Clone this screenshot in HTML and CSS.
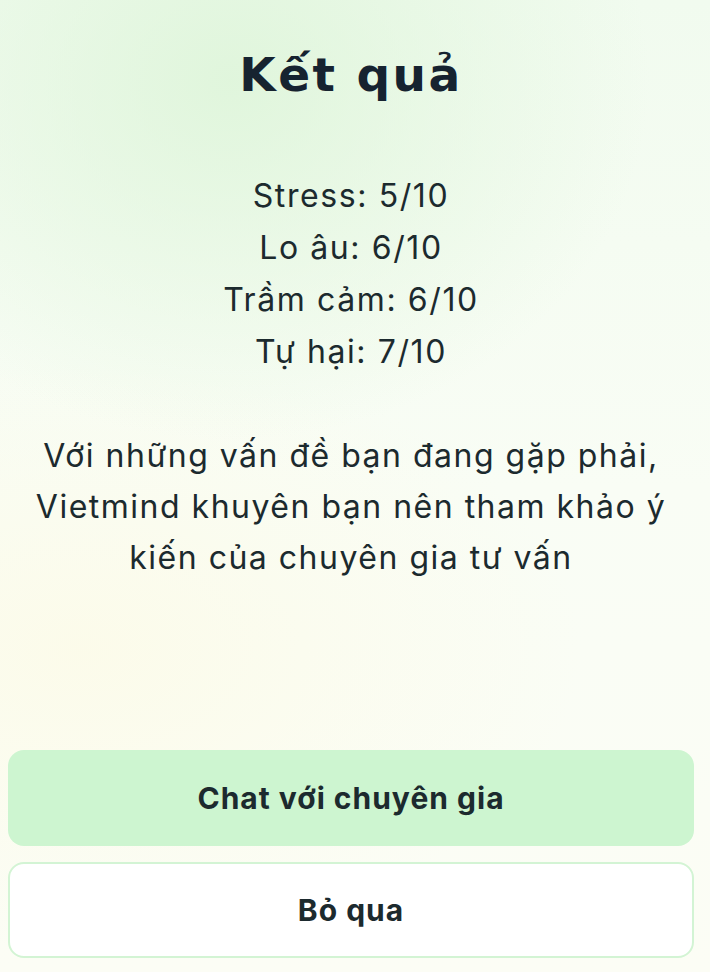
FILE: index.html
```html
<!DOCTYPE html>
<html lang="vi">
<head>
<meta charset="utf-8">
<title>Kết quả</title>
<link rel="stylesheet" href="styles.css">
</head>
<body>
<main class="screen">
  <h1 class="title">Kết quả</h1>
  <ul class="scores">
    <li>Stress: 5/10</li>
    <li>Lo âu: 6/10</li>
    <li>Trầm cảm: 6/10</li>
    <li>Tự hại: 7/10</li>
  </ul>
  <p class="advice">Với những vấn đề bạn đang gặp phải, Vietmind khuyên bạn nên tham khảo ý kiến của chuyên gia tư vấn</p>
  <div class="actions">
    <button class="btn btn-primary">Chat với chuyên gia</button>
    <button class="btn btn-secondary">Bỏ qua</button>
  </div>
</main>
</body>
</html>
```
FILE: styles.css
```css
* { box-sizing: border-box; }
html, body { margin: 0; height: 100%; }
body {
  font-family: "Inter", "Liberation Sans", sans-serif;
  color: #1c2a2e;
  background:
    radial-gradient(ellipse 420px 360px at 230px 80px, rgba(222, 245, 218, 0.9), rgba(222, 245, 218, 0) 100%),
    radial-gradient(ellipse 500px 300px at 80px 650px, rgba(252, 251, 233, 0.9), rgba(252, 251, 233, 0) 100%),
    linear-gradient(180deg, #f1fbef 0%, #f9fdf5 50%, #fcfdf5 100%);
  width: 710px;
  height: 972px;
  overflow: hidden;
}
.screen {
  display: flex;
  flex-direction: column;
  align-items: center;
  height: 972px;
  padding: 0 16px 0 8px;
}
.title {
  margin: 40px 0 0;
  font-family: "DejaVu Sans", "Inter", sans-serif;
  font-weight: 700;
  font-size: 47px;
  line-height: 70px;
  letter-spacing: 2.5px;
  color: #162330;
}
.scores {
  list-style: none;
  margin: 60px 0 0;
  padding: 0;
  text-align: center;
  font-size: 32px;
  line-height: 52px;
  font-weight: 400;
  letter-spacing: 1.6px;
}
.advice {
  margin: 52px 0 0;
  text-align: center;
  font-size: 32px;
  line-height: 51px;
  letter-spacing: 1.5px;
  padding: 0 10px;
}
.actions {
  margin-top: auto;
  margin-bottom: 14px;
  width: 686px;
  display: flex;
  flex-direction: column;
  gap: 16px;
}
.btn {
  height: 96px;
  border-radius: 16px;
  font-family: "Inter", "Liberation Sans", sans-serif;
  font-size: 30px;
  font-weight: 700;
  letter-spacing: 1px;
  color: #1c2a2e;
  cursor: pointer;
}
.btn-primary {
  background: #cdf5d0;
  border: none;
}
.btn-secondary {
  background: #ffffff;
  border: 2px solid #d3f4d4;
}
```
